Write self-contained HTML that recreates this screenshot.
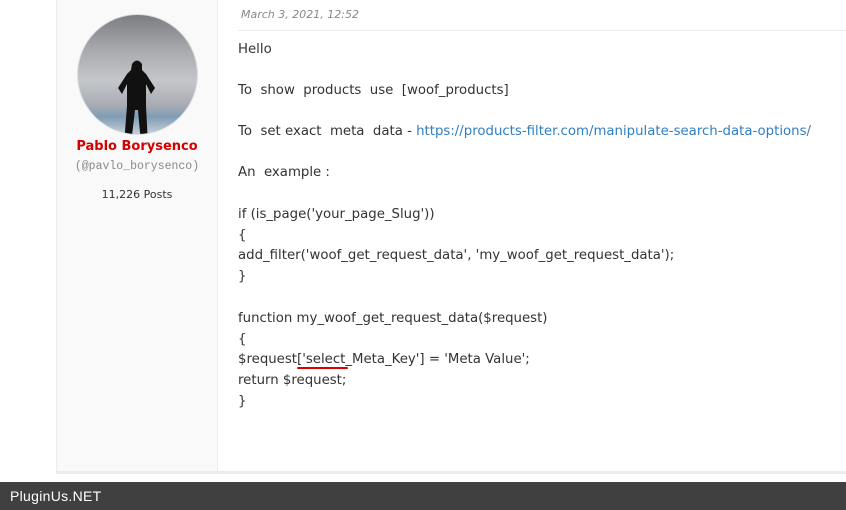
<!DOCTYPE html>
<html><head><style>
body{margin:0;width:846px;height:510px;background:#fff;position:relative;overflow:hidden;font-family:"DejaVu Sans",sans-serif;}
.side{position:absolute;left:56px;top:0;width:160px;height:472px;background:#f9f9f9;border-left:1px solid #ececec;border-right:1px solid #ececec;}
.bot{position:absolute;left:56px;top:471px;width:790px;height:3px;background:#ececec;}
.foot{position:absolute;left:0;top:482px;width:846px;height:28px;background:#404040;color:#fff;font-family:"Liberation Sans",sans-serif;font-size:14px;line-height:28px;padding-left:10px;box-sizing:border-box;letter-spacing:.3px}
.t{position:absolute;left:238px;font-size:13.3px;color:#333;white-space:pre;line-height:20.7px}
a{color:#2f7fc1;text-decoration:none}
</style></head><body>
<div class="side"></div>
<div class="bot"></div>
<svg style="position:absolute;left:77px;top:14px" width="121" height="121">
<defs><clipPath id="c"><circle cx="60.5" cy="60.5" r="60"/></clipPath>
<linearGradient id="g" x1="0" y1="0" x2="0" y2="1"><stop offset="0" stop-color="#7a7c80"/><stop offset=".3" stop-color="#a8aaae"/><stop offset=".55" stop-color="#c4c6ca"/><stop offset=".75" stop-color="#a9adb3"/><stop offset=".85" stop-color="#7f9cb3"/><stop offset="1" stop-color="#c9d4dc"/></linearGradient></defs>
<g clip-path="url(#c)"><rect width="121" height="121" fill="url(#g)"/>
<path d="M54 56 L50 60 L41 74 L45 80 L50 70 L50 92 L47 130 L54 130 L58 96 L61 96 L64 130 L71 130 L69 92 L69 70 L74 80 L78 74 L69 60 L65 56 L65 50 Q60 43 55 50Z" fill="#111"/></g>
<circle cx="60.5" cy="60.5" r="60" fill="none" stroke="#ddd" stroke-width="1"/>
</svg>
<div style="position:absolute;left:56px;width:162px;top:139px;text-align:center;color:#d40000;font-weight:bold;font-size:13px">Pablo Borysenco</div>
<div style="position:absolute;left:56px;width:162px;top:160px;text-align:center;color:#888;font-family:'Liberation Mono',monospace;font-size:11.5px">(@pavlo_borysenco)</div>
<div style="position:absolute;left:56px;width:162px;top:188px;text-align:center;color:#333;font-size:11px">11,226 Posts</div>
<div style="position:absolute;left:241px;top:8px;font-size:11px;font-style:italic;color:#888">March 3, 2021, 12:52</div>
<div style="position:absolute;left:238px;top:30px;width:608px;height:1px;background:#ececec"></div>
<div class="t" style="top:40px">Hello</div>
<div class="t" style="top:81px">To  show  products  use  [woof_products]</div>
<div class="t" style="top:122px">To  set exact  meta  data - <a>https://products-filter.com/manipulate-search-data-options/</a></div>
<div class="t" style="top:163px">An  example :</div>
<div class="t" style="top:205px">if (is_page('your_page_Slug'))
{
add_filter('woof_get_request_data', 'my_woof_get_request_data');
}</div>
<div class="t" style="top:309px">function my_woof_get_request_data($request)
{
$request['select_Meta_Key'] = 'Meta Value';
return $request;
}</div>
<div style="position:absolute;left:297px;top:367px;width:51px;height:2px;background:#d00;border-radius:1px"></div>
<div class="foot">PluginUs.NET</div>
</body></html>
